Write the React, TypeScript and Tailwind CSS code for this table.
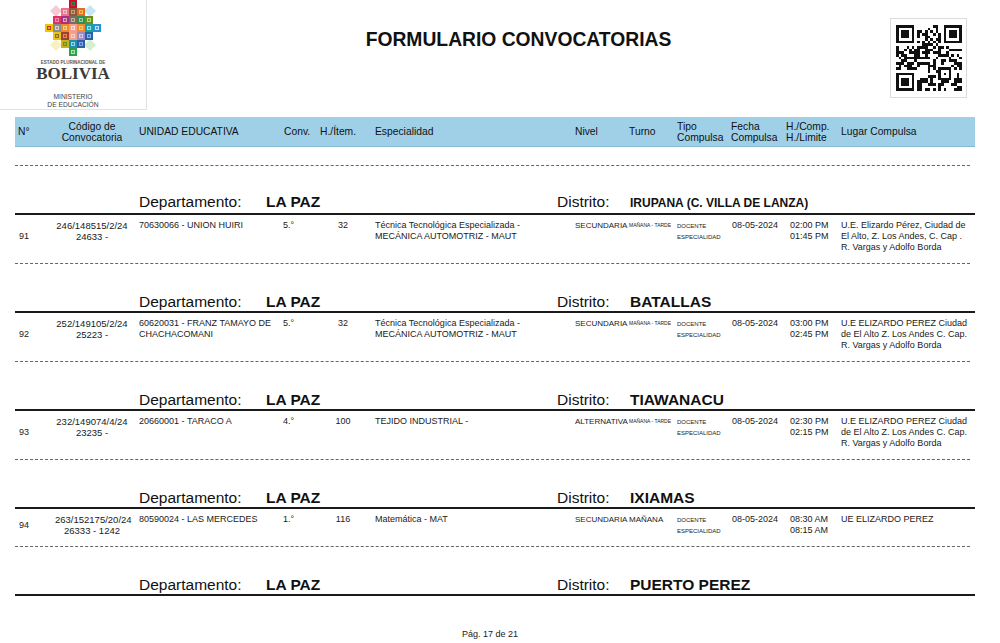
import React from "react"

// shared column template for the header bar and the data rows (starts at x=15, 960px wide)
const cols = "grid grid-cols-[40px_74px_149px_42px_55px_200px_54px_48px_54px_55px_55px_134px]"

type Row = {
  n: string
  code: string[]
  unidad: string[]
  conv: string
  item: string
  esp: string[]
  nivel: string
  turno: string
  turnoSmall: boolean
  fecha: string
  horas: string[]
  lugar: string[]
}

type Group = {
  distrito: string
  small?: boolean
  rows: Row[]
}

const lugarPerez = ["U.E ELIZARDO PEREZ Ciudad", "de El Alto Z. Los Andes C. Cap.", "R. Vargas y Adolfo Borda"]
const espMaut = ["Técnica Tecnológica Especializada -", "MECÁNICA AUTOMOTRIZ - MAUT"]

const groups: Group[] = [
  {
    distrito: "IRUPANA (C. VILLA DE LANZA)",
    small: true,
    rows: [
      {
        n: "91",
        code: ["246/148515/2/24", "24633 -"],
        unidad: ["70630066 - UNION HUIRI"],
        conv: "5.°",
        item: "32",
        esp: espMaut,
        nivel: "SECUNDARIA",
        turno: "MAÑANA - TARDE",
        turnoSmall: true,
        fecha: "08-05-2024",
        horas: ["02:00 PM", "01:45 PM"],
        lugar: ["U.E. Elizardo Pérez, Ciudad de", "El Alto, Z. Los Andes, C. Cap .", "R. Vargas y Adolfo Borda"],
      },
    ],
  },
  {
    distrito: "BATALLAS",
    rows: [
      {
        n: "92",
        code: ["252/149105/2/24", "25223 -"],
        unidad: ["60620031 - FRANZ TAMAYO DE", "CHACHACOMANI"],
        conv: "5.°",
        item: "32",
        esp: espMaut,
        nivel: "SECUNDARIA",
        turno: "MAÑANA - TARDE",
        turnoSmall: true,
        fecha: "08-05-2024",
        horas: ["03:00 PM", "02:45 PM"],
        lugar: lugarPerez,
      },
    ],
  },
  {
    distrito: "TIAWANACU",
    rows: [
      {
        n: "93",
        code: ["232/149074/4/24", "23235 -"],
        unidad: ["20660001 - TARACO A"],
        conv: "4.°",
        item: "100",
        esp: ["TEJIDO INDUSTRIAL -"],
        nivel: "ALTERNATIVA",
        turno: "MAÑANA - TARDE",
        turnoSmall: true,
        fecha: "08-05-2024",
        horas: ["02:30 PM", "02:15 PM"],
        lugar: lugarPerez,
      },
    ],
  },
  {
    distrito: "IXIAMAS",
    rows: [
      {
        n: "94",
        code: ["263/152175/20/24", "26333 - 1242"],
        unidad: ["80590024 - LAS MERCEDES"],
        conv: "1.°",
        item: "116",
        esp: ["Matemática - MAT"],
        nivel: "SECUNDARIA",
        turno: "MAÑANA",
        turnoSmall: false,
        fecha: "08-05-2024",
        horas: ["08:30 AM", "08:15 AM"],
        lugar: ["UE ELIZARDO PEREZ"],
      },
    ],
  },
  { distrito: "PUERTO PEREZ", rows: [] },
]

// tile colours of the emblem, row by row (diamond of 1-3-5-7-5-3-1 tiles)
const emblem: [string, string][][] = [
  [["#c8102e", "#2e8b3e"]],
  [["#e9738d", "#f6c2cf"], ["#8a5a3c", "#c9a06a"], ["#e26b2c", "#f5c04a"]],
  [["#d9336a", "#f08aa6"], ["#a8327a", "#e0a0c8"], ["#7d6b5d", "#c2b19a"], ["#2f8f4e", "#8fd19e"], ["#6b8e23", "#c5d86d"]],
  [["#f2c500", "#c0392b"], ["#8c8c8c", "#d9d2c5"], ["#ef8a2b", "#fbd38d"], ["#f29e8e", "#fde0d6"], ["#f08c2e", "#fbc97a"], ["#1aa0a0", "#8fe0e0"], ["#2a8fd0", "#bfe3f7"]],
  [["#e8c41a", "#8a6d1f"], ["#a0412d", "#e08a5a"], ["#f2a08a", "#fbd1c2"], ["#9b8ac4", "#d4c8ec"], ["#2563a8", "#8ab8e6"]],
  [["#c9b21d", "#6b8e23"], ["#1f8fb0", "#8fd4e8"], ["#2f5fa8", "#7fa8e0"]],
  [["#2e9e4f", "#b6e3a0"]],
]

function Emblem() {
  const diamond = (cx: number, cy: number, fill: string) => (
    <polygon points={`${cx},${cy - 6} ${cx + 6},${cy} ${cx},${cy + 6} ${cx - 6},${cy}`} fill={fill} />
  )
  return (
    <svg width="56" height="56" viewBox="0 0 56 56" className="block">
      {diamond(11, 11, "#f7c9d6")}
      {diamond(45, 11, "#c6e6f7")}
      {diamond(11, 45, "#f8f1bf")}
      {diamond(45, 45, "#d3efcf")}
      {emblem.map((row, r) =>
        row.map(([a, b], i) => {
          const c = 3 - (row.length - 1) / 2 + i
          const x = c * 8
          const y = r * 8
          return (
            <g key={`${r}-${i}`}>
              <rect x={x} y={y} width="8" height="8" fill={a} />
              <rect x={x + 2} y={y + 2} width="4" height="4" fill={b} />
              <rect x={x + 3} y={y + 3} width="2" height="2" fill={a} opacity="0.8" />
            </g>
          )
        })
      )}
    </svg>
  )
}

function qrMatrix() {
  const n = 25
  let seed = 98321
  const rand = () => {
    seed = (seed * 1103515245 + 12345) & 0x7fffffff
    return seed / 0x7fffffff
  }
  const m: boolean[][] = Array.from({ length: n }, () => Array.from({ length: n }, () => rand() > 0.52))
  const finder = (ox: number, oy: number) => {
    for (let y = -1; y <= 7; y++)
      for (let x = -1; x <= 7; x++) {
        const px = ox + x
        const py = oy + y
        if (px < 0 || py < 0 || px >= n || py >= n) continue
        const edge = x === 0 || x === 6 || y === 0 || y === 6
        const core = x >= 2 && x <= 4 && y >= 2 && y <= 4
        m[py][px] = x >= 0 && x <= 6 && y >= 0 && y <= 6 && (edge || core)
      }
  }
  finder(0, 0)
  finder(18, 0)
  finder(0, 18)
  for (let i = 8; i <= 16; i++) {
    m[6][i] = i % 2 === 0
    m[i][6] = i % 2 === 0
  }
  for (let y = -2; y <= 2; y++)
    for (let x = -2; x <= 2; x++) m[18 + y][18 + x] = Math.max(Math.abs(x), Math.abs(y)) !== 1
  return m
}

function QrCode() {
  const m = qrMatrix()
  return (
    <svg width="66" height="66" viewBox="0 0 25 25" shapeRendering="crispEdges" className="block">
      {m.map((row, y) => row.map((on, x) => (on ? <rect key={`${x}-${y}`} x={x} y={y} width="1" height="1" fill="#111" /> : null)))}
    </svg>
  )
}

function Lines({ lines }: { lines: string[] }) {
  return (
    <>
      {lines.map((l) => (
        <div key={l} className="whitespace-nowrap">
          {l}
        </div>
      ))}
    </>
  )
}

function DataRow({ row }: { row: Row }) {
  return (
    <div className={`${cols} pt-[5px] pb-[10px] text-[9px] leading-[11px] text-[#1a1a1a]`}>
      <div className="self-center pl-[4px]">{row.n}</div>
      <div className="text-center text-[9.5px]">
        <Lines lines={row.code} />
      </div>
      <div className="pl-[10px]">
        <Lines lines={row.unidad} />
      </div>
      <div className="pl-[5px]">{row.conv}</div>
      <div className="pr-[9px] text-center">{row.item}</div>
      <div>
        <Lines lines={row.esp} />
      </div>
      <div className="whitespace-nowrap text-[8px]">{row.nivel}</div>
      <div className={`whitespace-nowrap ${row.turnoSmall ? "text-[5px]" : "text-[8px]"}`}>{row.turno}</div>
      <div className="pt-[1px] text-[6px] leading-[10.5px]">
        <div>DOCENTE</div>
        <div>ESPECIALIDAD</div>
      </div>
      <div className="pl-[1px]">{row.fecha}</div>
      <div className="pl-[4px]">
        <Lines lines={row.horas} />
      </div>
      <div>
        <Lines lines={row.lugar} />
      </div>
    </div>
  )
}

function Dashed() {
  return <div className="mr-[5px] border-t border-dashed border-[#666]" />
}

export default function App() {
  return (
    <div className="relative h-[643px] w-[1000px] overflow-hidden bg-white font-['Liberation_Sans',Arial,sans-serif] text-[#111]">
      {/* top: logo, title, qr */}
      <div className="flex h-[117px] items-start">
        <div className="flex h-[110px] w-[147px] flex-col items-center border-r border-b border-[#e2e2e2]">
          <Emblem />
          <div className="mt-[4px] text-[4.5px] font-bold leading-[6px] text-[#555]">ESTADO PLURINACIONAL DE</div>
          <div className="font-['Liberation_Serif',serif] text-[17px] font-bold leading-[16px] text-[#3a3a3a]">BOLIVIA</div>
          <div className="mt-[11px] text-[6.7px] leading-[8px] text-[#444]">MINISTERIO</div>
          <div className="text-[6.7px] leading-[8px] text-[#444]">DE EDUCACIÓN</div>
        </div>
        <div className="mt-[29px] flex-1 text-center text-[19.3px] font-bold leading-[22px]">FORMULARIO CONVOCATORIAS</div>
        <div className="mt-[18px] mr-[33px] flex h-[80px] w-[77px] items-center justify-center border border-[#dcdcdc]">
          <QrCode />
        </div>
      </div>

      <div className="ml-[15px] w-[960px]">
        {/* column header bar */}
        <div className={`${cols} h-[30px] items-center border-b border-[#86b9d6] bg-[#9fd0e8] text-[10.3px] leading-[11px] text-[#111]`}>
          <div className="pl-[3px]">N°</div>
          <div className="text-center">
            Código de
            <br />
            Convocatoria
          </div>
          <div className="pl-[10px]">UNIDAD EDUCATIVA</div>
          <div className="pl-[6px]">Conv.</div>
          <div>H./Ítem.</div>
          <div>Especialidad</div>
          <div>Nivel</div>
          <div>Turno</div>
          <div>
            Tipo
            <br />
            Compulsa
          </div>
          <div>
            Fecha
            <br />
            Compulsa
          </div>
          <div>
            H./Comp.
            <br />
            H./Limite
          </div>
          <div>Lugar Compulsa</div>
        </div>

        <div className="mt-[18px]">
          <Dashed />
          {groups.map((g) => (
            <div key={g.distrito}>
              <div className="flex h-[47px] items-end pb-[1px]">
                <div className="flex w-full items-baseline pl-[124px] text-[15.5px] leading-[17px]">
                  <span className="w-[127px]">Departamento:</span>
                  <span className="w-[291px] font-bold">LA PAZ</span>
                  <span className="w-[73px]">Distrito:</span>
                  <span className={`font-bold ${g.small ? "text-[12px]" : ""}`}>{g.distrito}</span>
                </div>
              </div>
              <div className="h-[2px] bg-[#1a1a1a]" />
              {g.rows.map((r) => (
                <div key={r.n}>
                  <DataRow row={r} />
                  <Dashed />
                </div>
              ))}
            </div>
          ))}
        </div>
      </div>

      <div className="mt-[33px] pr-[20px] text-center text-[9px] leading-[11px] text-[#222]">Pág. 17 de 21</div>
    </div>
  )
}
